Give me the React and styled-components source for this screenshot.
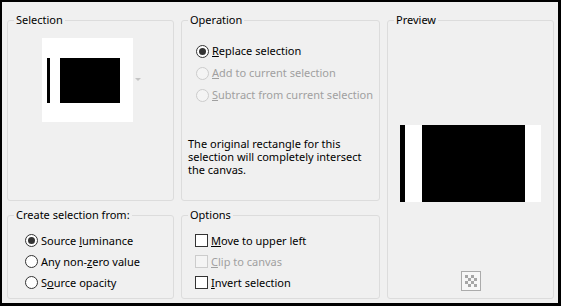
import styled, { createGlobalStyle } from "styled-components";

const GlobalStyle = createGlobalStyle`
  body {
    margin: 0;
    background: #fff;
  }
`

const Window = styled.div`
  width: 561px;
  height: 306px;
  box-sizing: border-box;
  border-style: solid;
  border-color: #000;
  border-width: 2px 3px 3px 2px;
  background: #f0f0f0;
  padding: 10px 4px 4px 5px;
  display: flex;
  gap: 7px;
  font-family: "Noto Sans", "Open Sans", sans-serif;
  font-size: 11px;
  color: #000;
`

const Column = styled.div`
  width: ${props => props.$width}px;
  display: flex;
  flex-direction: column;
  gap: 6px;
`

const Group = styled.fieldset`
  margin: 0;
  padding: 0;
  min-width: 0;
  box-sizing: border-box;
  border: 1px solid #dcdcdc;
  border-radius: 3px;
  height: ${props => props.$height ? props.$height + "px" : "auto"};
  flex: ${props => props.$height ? "none" : 1};
  display: flex;
  flex-direction: column;
`

const Legend = styled.legend`
  margin-left: 6px;
  padding: 0 2px;
  line-height: 16px;
`

const Body = styled.div`
  display: flex;
  flex-direction: column;
  padding: ${props => props.$pad};
`

const ThumbRow = styled.div`
  display: flex;
  align-items: center;
  gap: 2px;
`

const Thumb = styled.div`
  width: 91px;
  height: 84px;
  background: #fff;
  display: flex;
  align-items: center;
  justify-content: center;
`

const Arrow = styled.span`
  width: 0;
  height: 0;
  border-left: 3px solid transparent;
  border-right: 3px solid transparent;
  border-top: 3px solid #c4c4c4;
  margin-top: -1px;
`

const Option = styled.label`
  display: flex;
  align-items: center;
  gap: 3px;
  height: ${props => props.$row}px;
  color: ${props => props.$disabled ? "#a0a0a0" : "#000"};
  line-height: 14px;
`

const Radio = styled.span`
  width: 13px;
  height: 13px;
  box-sizing: border-box;
  border-radius: 50%;
  border: 1px solid ${props => props.$disabled ? "#cccccc" : "#333"};
  background: ${props => props.$disabled ? "#f4f4f4" : "#fff"};
  display: flex;
  align-items: center;
  justify-content: center;

  &::after {
    content: "";
    display: ${props => props.$checked ? "block" : "none"};
    width: 7px;
    height: 7px;
    border-radius: 50%;
    background: #333;
  }
`

const Check = styled.span`
  width: 13px;
  height: 13px;
  box-sizing: border-box;
  border: 1px solid ${props => props.$disabled ? "#cccccc" : "#333"};
  background: ${props => props.$disabled ? "#f4f4f4" : "#fff"};
`

const Key = styled.span`
  text-decoration: underline;
`

const Note = styled.p`
  margin: 31px 0 0;
  padding: 0 6px;
  line-height: 13px;
`

const PreviewImage = styled.div`
  align-self: center;
  width: 141px;
  height: 77px;
  background: #fff;
`

const CheckerButton = styled.div`
  align-self: center;
  margin-top: 69px;
  width: 20px;
  height: 20px;
`

const SelectionThumb = () => (
    <svg width="91" height="84" viewBox="0 0 91 84">
        <rect x="5" y="20" width="3" height="45" fill="#000"/>
        <rect x="18" y="20" width="60" height="45" fill="#000"/>
    </svg>
)

const PreviewShape = () => (
    <svg width="141" height="77" viewBox="0 0 141 77">
        <rect x="0" y="0" width="5" height="77" fill="#000"/>
        <rect x="22" y="0" width="103" height="77" fill="#000"/>
    </svg>
)

const Checker = () => {
    const cells = []
    for (let r = 0; r < 4; r++) {
        for (let c = 0; c < 4; c++) {
            if ((r + c) % 2 === 0) {
                cells.push(<rect key={r + "-" + c} x={4 + c * 3} y={4 + r * 3} width="3" height="3" fill="#a6a6a6"/>)
            }
        }
    }
    return (
        <svg width="20" height="20" viewBox="0 0 20 20">
            <rect x="0.5" y="0.5" width="19" height="19" fill="#f7f7f7" stroke="#ababab"/>
            {cells}
        </svg>
    )
}

const App = () => {
    return (
        <Window>
            <GlobalStyle/>
            <Column $width={167}>
                <Group $height={189}>
                    <Legend>Selection</Legend>
                    <Body $pad="10px 0 0 34px">
                        <ThumbRow>
                            <Thumb><SelectionThumb/></Thumb>
                            <Arrow/>
                        </ThumbRow>
                    </Body>
                </Group>
                <Group>
                    <Legend>Create selection from:</Legend>
                    <Body $pad="7px 0 0 17px">
                        <Option $row={21}><Radio $checked/><span>Source <Key>l</Key>uminance</span></Option>
                        <Option $row={21}><Radio/><span>Any non-<Key>z</Key>ero value</span></Option>
                        <Option $row={21}><Radio/><span>S<Key>o</Key>urce opacity</span></Option>
                    </Body>
                </Group>
            </Column>
            <Column $width={199}>
                <Group $height={189}>
                    <Legend>Operation</Legend>
                    <Body $pad="12px 0 0 14px">
                        <Option $row={22}><Radio $checked/><span><Key>R</Key>eplace selection</span></Option>
                        <Option $row={22} $disabled><Radio $disabled/><span><Key>A</Key>dd to current selection</span></Option>
                        <Option $row={22} $disabled><Radio $disabled/><span><Key>S</Key>ubtract from current selection</span></Option>
                    </Body>
                    <Note>
                        The original rectangle for this<br/>
                        selection will completely intersect<br/>
                        the canvas.
                    </Note>
                </Group>
                <Group>
                    <Legend>Options</Legend>
                    <Body $pad="7px 0 0 13px">
                        <Option $row={21}><Check/><span><Key>M</Key>ove to upper left</span></Option>
                        <Option $row={21} $disabled><Check $disabled/><span><Key>C</Key>lip to canvas</span></Option>
                        <Option $row={21}><Check/><span><Key>I</Key>nvert selection</span></Option>
                    </Body>
                </Group>
            </Column>
            <Column $width={167}>
                <Group>
                    <Legend>Preview</Legend>
                    <Body $pad="97px 0 0 0">
                        <PreviewImage><PreviewShape/></PreviewImage>
                        <CheckerButton><Checker/></CheckerButton>
                    </Body>
                </Group>
            </Column>
        </Window>
    )
}

export default App
